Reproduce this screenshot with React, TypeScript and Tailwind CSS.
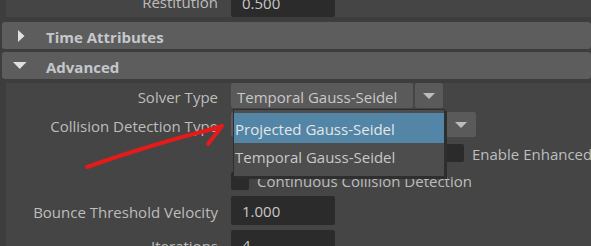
import React from "react";

const font = "font-['Open_Sans',_'Noto_Sans',_sans-serif]";

function Label({ text }: { text: string }) {
  return (
    <div className="w-[225px] shrink-0 pr-[13px] pt-[3px] text-right text-[#bdbdbd] whitespace-nowrap">
      {text}
    </div>
  );
}

function Caret() {
  return (
    <svg width="12" height="6" viewBox="0 0 12 6">
      <path d="M0 0 L12 0 L6 6 Z" fill="#bdbdbd" />
    </svg>
  );
}

function Dropdown({ value, width, btn }: { value: string; width: number; btn: number }) {
  return (
    <div className="flex h-full gap-[2px]">
      <div
        className="flex h-full items-center rounded-[2px] bg-[#5a5a5a] pl-[6px] pt-[3px] text-[#c8c8c8] whitespace-nowrap"
        style={{ width }}
      >
        {value}
      </div>
      <div className="flex h-full items-center justify-center rounded-[2px] bg-[#5a5a5a]" style={{ width: btn }}>
        <Caret />
      </div>
    </div>
  );
}

function Field({ value }: { value: string }) {
  return (
    <div className="flex h-[29px] w-[104px] items-center rounded-[2px] bg-[#2b2b2b] pl-[11px] pt-[1px] text-[#c8c8c8]">
      {value}
    </div>
  );
}

function Checkbox() {
  return <div className="h-[18px] w-[18px] shrink-0 rounded-[2px] bg-[#2b2b2b]" />;
}

function Header({ title, open }: { title: string; open: boolean }) {
  return (
    <div className="ml-[2px] flex h-[27px] items-center rounded-[3px] bg-[#5d5d5d]">
      <div className="flex w-[44px] justify-start pl-[11px]">
        {open ? (
          <svg width="14" height="7" viewBox="0 0 14 7">
            <path d="M0 0 L13.5 0 L6.75 7 Z" fill="#e0e0e0" />
          </svg>
        ) : (
          <svg width="14" height="12" viewBox="0 0 14 12">
            <path d="M5 0 L11.5 6 L5 12 Z" fill="#e0e0e0" />
          </svg>
        )}
      </div>
      <span className="pt-[4px] font-bold text-[#c4c8cc]">{title}</span>
    </div>
  );
}

export default function App() {
  return (
    <div className={`relative h-[246px] w-[591px] overflow-hidden bg-[#3d3d3d] text-[15px] leading-[19px] ${font}`}>
      {/* Restitution row, scrolled mostly out of view */}
      <div className="ml-[6px] flex h-[17px] items-end overflow-hidden bg-[#454545]">
        <div className="flex h-[29px] shrink-0 items-center">
          <div className="w-[225px] shrink-0 pr-[13px] text-right text-[#bdbdbd]">Restitution</div>
          <Field value="0.500" />
        </div>
      </div>

      <div className="mt-[5px] flex flex-col gap-[3px]">
        <Header title="Time Attributes" open={false} />
        <Header title="Advanced" open />
      </div>

      <div className="ml-[6px] mt-[4px] flex h-[200px] flex-col bg-[#454545]">
        <div className="flex h-[25px] items-center">
          <Label text="Solver Type" />
          <Dropdown value="Temporal Gauss-Seidel" width={182} btn={28} />
        </div>
        <div className="mt-[4px] flex h-[25px] items-center">
          <Label text="Collision Detection Type" />
          <Dropdown value="Projected Gauss-Seidel" width={213} btn={30} />
        </div>
        <div className="mt-[7px] flex h-[18px] items-center">
          <div className="w-[225px] shrink-0" />
          <div className="w-[215px] shrink-0" />
          <Checkbox />
          <span className="ml-[8px] pt-[2px] text-[#bdbdbd] whitespace-nowrap">Enable Enhanced Determinism</span>
        </div>
        <div className="mt-[10px] flex h-[18px] items-center">
          <div className="w-[225px] shrink-0" />
          <Checkbox />
          <span className="ml-[8px] text-[#bdbdbd] whitespace-nowrap">Continuous Collision Detection</span>
        </div>
        <div className="mt-[6px] flex h-[29px] items-center">
          <Label text="Bounce Threshold Velocity" />
          <Field value="1.000" />
        </div>
        <div className="mt-[5px] flex h-[29px] items-center">
          <Label text="Iterations" />
          <Field value="4" />
        </div>
      </div>

      {/* open dropdown menu */}
      <div className="absolute left-[233px] top-[109px] flex h-[68px] w-[212px] flex-col border border-[#2e2e2e] bg-[#4d4d4d] pt-[3px] shadow-[2px_2px_0_#2e2e2e]">
        <div className="flex h-[30px] shrink-0 items-center bg-[#5285a6] pl-[1px] pt-[3px] text-[#e6e6e6] whitespace-nowrap">
          Projected Gauss-Seidel
        </div>
        <div className="flex h-[28px] shrink-0 items-center pl-[1px] text-[#c8c8c8] whitespace-nowrap">
          Temporal Gauss-Seidel
        </div>
      </div>

      {/* red annotation arrow */}
      <svg className="pointer-events-none absolute left-0 top-0" width="591" height="246" viewBox="0 0 591 246">
        <g fill="none" stroke="#e31b1b" strokeWidth="4" strokeLinecap="round" strokeLinejoin="round">
          <path d="M87 167 C 130 152, 175 138, 221 127" />
          <path d="M205 131 L222 126 L208 144" />
        </g>
      </svg>
    </div>
  );
}
